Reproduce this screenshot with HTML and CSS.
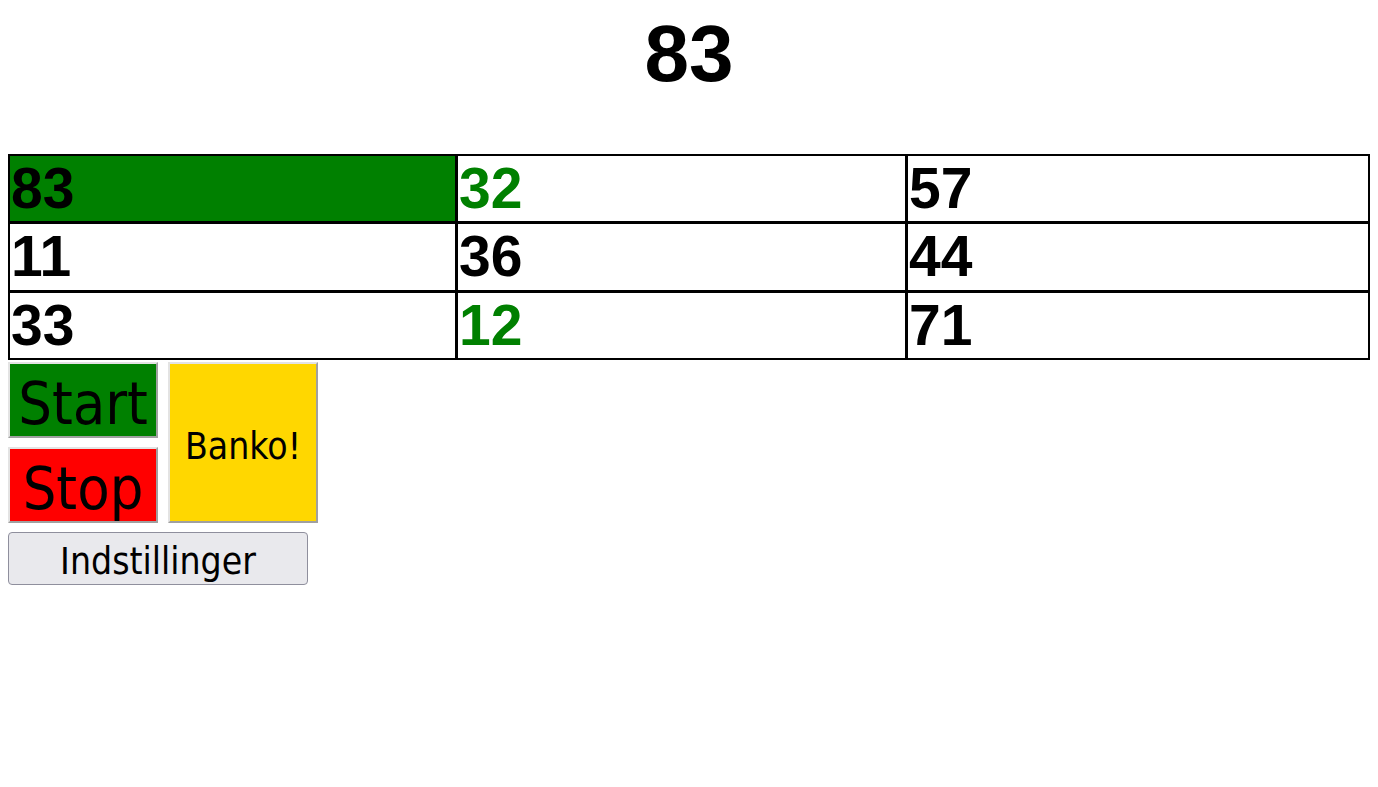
FILE: index.html
```html
<!DOCTYPE html>
<html lang="da">
<head>
    <meta charset="UTF-8">
    <meta name="viewport" content="width=device-width, initial-scale=1">
    <title>Banko</title>
    <link rel="stylesheet" href="styles.css">
</head>
<body>
    <h1 id="current">83</h1>
    <div class="board">
        <div class="cell drawn">83</div>
        <div class="cell hit">32</div>
        <div class="cell">57</div>
        <div class="cell">11</div>
        <div class="cell">36</div>
        <div class="cell">44</div>
        <div class="cell">33</div>
        <div class="cell hit">12</div>
        <div class="cell">71</div>
    </div>
    <div class="controls">
        <div class="stack">
            <button class="big start">Start</button>
            <button class="big stop">Stop</button>
        </div>
        <button class="banko">Banko!</button>
    </div>
    <button class="settings">Indstillinger</button>
</body>
</html>
```

FILE: styles.css
```css
body { margin: 8px; font-family: "Liberation Sans", Arial, sans-serif; }
h1 { font-size: 80px; text-align: center; margin: 0 0 0.67em; }

.board {
    display: grid;
    grid-template-columns: 445fr 447fr 460fr;
    gap: 3px;
    background: #000;
    border: 2px solid #000;
}
.cell {
    background: #fff;
    font-size: 57px;
    font-weight: bold;
    line-height: 65.5px;
    padding-left: 1px;
}
.cell.drawn { background: #008000; color: #000; }
.cell.hit { color: #008000; }

.controls { display: flex; gap: 10px; margin-top: 2px; }
.stack { display: flex; flex-direction: column; gap: 9px; }

button { font-family: "DejaVu Sans Condensed", Tahoma, sans-serif; color: #000; padding: 0; cursor: pointer; }
.big, .banko {
    width: 150px;
    border: 2px solid;
    border-color: #e3e3e3 #a0a0a0 #a0a0a0 #e3e3e3;
}
.big { height: 76px; font-size: 59px; line-height: 1; padding-top: 7px; }
.start { background: #008000; }
.stop { background: #ff0000; }
.banko { background: #ffd700; font-size: 37px; padding-top: 8px; }

.settings {
    display: block;
    margin-top: 9px;
    width: 300px;
    height: 53px;
    font-size: 37px;
    padding-top: 6px;
    background: #e9e9ed;
    border: 1px solid #8f8f9d;
    border-radius: 4px;
}
```
